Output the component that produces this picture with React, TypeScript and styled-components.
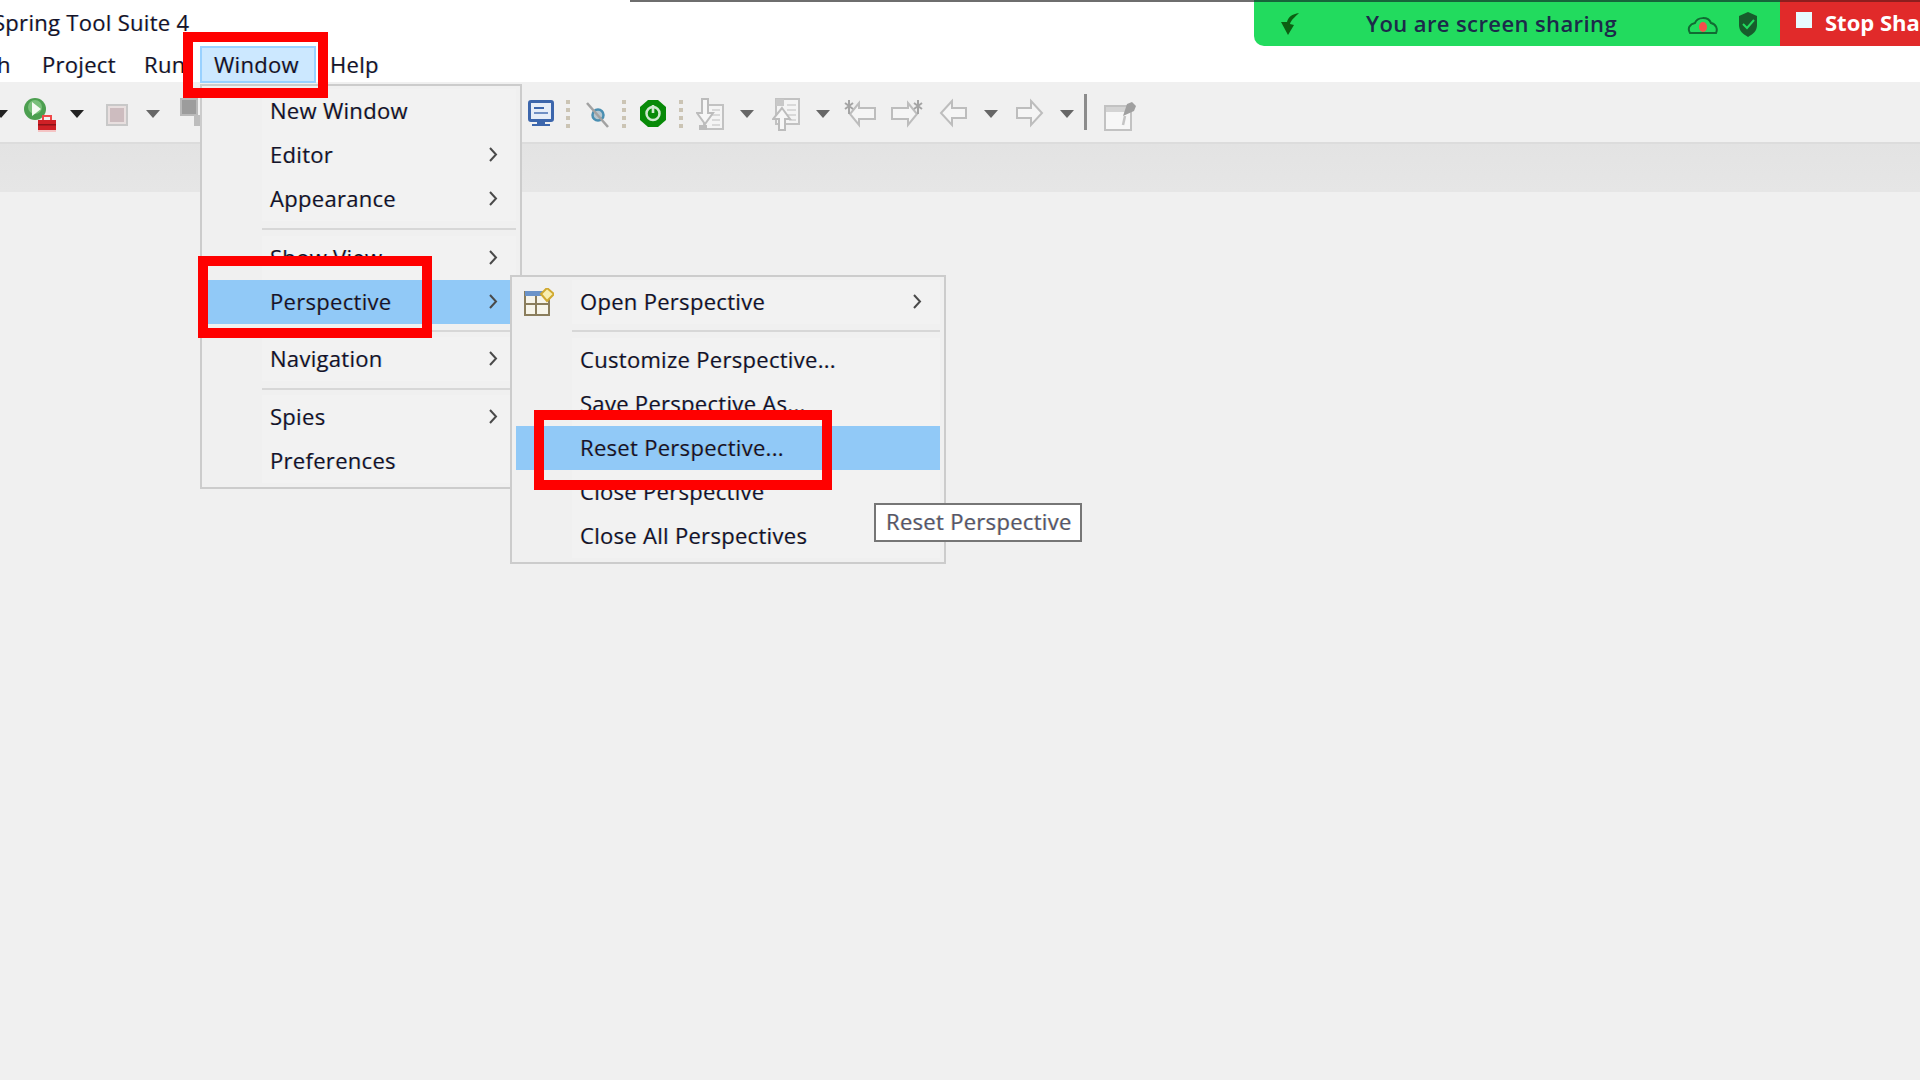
import React from 'react'
import styled, { createGlobalStyle } from 'styled-components'

const GlobalStyle = createGlobalStyle`
  html, body {
    margin: 0;
    padding: 0;
    width: 1920px;
    height: 1080px;
    overflow: hidden;
    background: #f0f0f0;
  }
  * { box-sizing: border-box; }
`

const fringe = `text-shadow: -0.6px 0 rgba(230, 150, 0, 0.35), 0.6px 0 rgba(0, 120, 255, 0.35);`

const Screen = styled.div`
  position: relative;
  width: 1920px;
  height: 1080px;
  overflow: hidden;
  background: #f0f0f0;
  font-family: "Open Sans", "Noto Sans", sans-serif;
  font-size: 22px;
  letter-spacing: 0.3px;
  color: #14142a;
`

const TitleBar = styled.div`
  height: 46px;
  background: #fff;
  display: flex;
  align-items: center;
  padding-bottom: 3px;
  ${fringe}
`

const Title = styled.span`
  margin-left: -7px;
  white-space: nowrap;
`

const MenuBar = styled.div`
  height: 36px;
  background: #fff;
  display: flex;
  align-items: center;
  ${fringe}
`

const MenuItem = styled.div<{ $w: number; $active?: boolean; $first?: boolean }>`
  flex: none;
  width: ${p => p.$w}px;
  height: 37px;
  display: flex;
  align-items: center;
  padding-left: ${p => (p.$active ? 12 : 14)}px;
  white-space: nowrap;
  margin-left: ${p => (p.$first ? -17 : 0)}px;
  background: ${p => (p.$active ? '#cce8ff' : 'transparent')};
  border: ${p => (p.$active ? '2px solid #99d1ff' : 'none')};
`

const Toolbar = styled.div`
  height: 60px;
  display: flex;
  align-items: center;
  background: #f0f0f0;
`

const Tool = styled.svg<{ $ml: number }>`
  flex: none;
  height: 40px;
  margin-left: ${p => p.$ml}px;
  filter: blur(0.45px);
`

const ToolDivider = styled.div`
  flex: none;
  width: 3px;
  height: 36px;
  margin-left: 10px;
  background: #8c8c8c;
`

const TabBand = styled.div`
  height: 50px;
  border-top: 2px solid #dcdcdc;
  background: linear-gradient(#e3e3e3, #e6e6e6);
`

const Menu = styled.div<{ $left: number; $top: number; $width: number }>`
  position: absolute;
  left: ${p => p.$left}px;
  top: ${p => p.$top}px;
  width: ${p => p.$width}px;
  padding: 3px 0 4px;
  border: 2px solid #cccccc;
  background: #f0f0f0;
`

const Row = styled.div<{ $active?: boolean; $inset: number }>`
  height: 44px;
  margin: 0 4px 0 ${p => p.$inset}px;
  display: flex;
  align-items: stretch;
  background: ${p => (p.$active ? '#91c9f7' : 'transparent')};
`

const IconCell = styled.div<{ $w: number }>`
  flex: none;
  width: ${p => p.$w}px;
  display: flex;
  align-items: center;
  padding-left: 8px;
`

const Label = styled.div<{ $active?: boolean }>`
  flex: 1;
  display: flex;
  align-items: center;
  justify-content: space-between;
  padding: 0 18px 2px 8px;
  white-space: nowrap;
  background: ${p => (p.$active ? 'transparent' : '#f2f2f2')};
  ${fringe}
`

const Divider = styled.div<{ $left: number; $above: number; $below: number }>`
  height: 2px;
  margin: ${p => p.$above}px 4px ${p => p.$below}px ${p => p.$left}px;
  background: #d7d7d7;
`

const Chevron = styled.svg`
  flex: none;
  width: 9px;
  height: 15px;
`

const TooltipBox = styled.div`
  position: absolute;
  left: 874px;
  top: 503px;
  width: 208px;
  height: 39px;
  padding: 0 0 3px 10px;
  display: flex;
  align-items: center;
  white-space: nowrap;
  background: #fff;
  border: 2px solid #767676;
  color: #575766;
  ${fringe}
`

const Callout = styled.div<{ $l: number; $t: number; $w: number; $h: number }>`
  position: absolute;
  left: ${p => p.$l}px;
  top: ${p => p.$t}px;
  width: ${p => p.$w}px;
  height: ${p => p.$h}px;
  border: 10px solid #ff0000;
`

const TopLine = styled.div`
  position: absolute;
  left: 630px;
  top: 0;
  width: 624px;
  height: 2px;
  background: #6e6e6e;
`

const ShareBar = styled.div`
  position: absolute;
  left: 1254px;
  top: 0;
  width: 680px;
  height: 46px;
  display: flex;
  border-bottom-left-radius: 10px;
  overflow: hidden;
`

const SharePanel = styled.div`
  flex: none;
  width: 526px;
  display: flex;
  align-items: center;
  padding-left: 26px;
  border-top: 2px solid #17653a;
  background: #22db5e;
`

const ShareText = styled.span`
  margin: -3px 0 0 66px;
  width: 309px;
  white-space: nowrap;
  letter-spacing: 0.4px;
  color: #1c2a4a;
  font-weight: 600;
`

const StopPanel = styled.div`
  flex: 1;
  display: flex;
  align-items: center;
  padding-left: 16px;
  border-top: 2px solid #8d1e1e;
  background: #e12a2a;
`

const StopSquare = styled.div`
  flex: none;
  width: 16px;
  height: 16px;
  margin: -8px 13px 0 0;
  background: #e6fbff;
`

const StopText = styled.span`
  margin-top: -4px;
  color: #fff;
  font-weight: 700;
  letter-spacing: 0;
  white-space: nowrap;
`

const ShareIcon = styled.svg<{ $ml: number; $w: number }>`
  flex: none;
  width: ${p => p.$w}px;
  height: 30px;
  margin-left: ${p => p.$ml}px;
`

const Drop = ({ ml, color = '#666' }: { ml: number; color?: string }) => (
  <Tool $ml={ml} width="14" viewBox="0 0 14 40">
    <polygon points="0,18 14,18 7,26" fill={color} />
  </Tool>
)

const Dots = ({ ml }: { ml: number }) => (
  <Tool $ml={ml} width="4" viewBox="0 0 4 40">
    {[10, 18, 26, 34].map(y => (
      <rect key={y} x="0" y={y - 2} width="4" height="4" fill="#cbc4b4" />
    ))}
  </Tool>
)

const RunIcon = ({ ml }: { ml: number }) => (
  <Tool $ml={ml} width="32" viewBox="0 0 32 40">
    <circle cx="11" cy="17" r="11" fill="#4c9f50" />
    <circle cx="11" cy="15" r="7" fill="#79c07a" />
    <polygon points="8,10 8,24 17,17" fill="#f4fbf2" />
    <rect x="19" y="24" width="8" height="5" fill="none" stroke="#f04848" strokeWidth="2" />
    <rect x="14" y="28" width="18" height="10" fill="#cf2026" />
    <rect x="14" y="32" width="18" height="1.5" fill="#8d1318" />
    <rect x="14" y="38" width="18" height="2" fill="#f4c4c4" />
  </Tool>
)

const StopIcon = ({ ml }: { ml: number }) => (
  <Tool $ml={ml} width="22" viewBox="0 0 22 40">
    <rect x="1" y="13" width="20" height="20" fill="#cdbcbf" stroke="#c8c8c8" strokeWidth="2" />
    <rect x="3" y="15" width="16" height="16" fill="none" stroke="#e8dfdf" strokeWidth="2" />
  </Tool>
)

const GreySquareIcon = ({ ml }: { ml: number }) => (
  <Tool $ml={ml} width="20" viewBox="0 0 20 40">
    <rect x="1" y="7" width="16" height="16" fill="#9c9c9c" stroke="#b9b9b9" strokeWidth="2" />
    <rect x="14" y="23" width="6" height="11" fill="#bdbdbd" />
  </Tool>
)

const MonitorIcon = ({ ml }: { ml: number }) => (
  <Tool $ml={ml} width="26" viewBox="0 0 26 40">
    <rect x="1.5" y="9.5" width="23" height="19" rx="1.5" fill="#e6edf8" stroke="#3c66ac" strokeWidth="3" />
    <rect x="6" y="15" width="10" height="2" fill="#3c66ac" />
    <rect x="6" y="20" width="14" height="2" fill="#6f8fc4" />
    <rect x="9" y="29" width="8" height="3" fill="#3c66ac" />
    <rect x="4" y="32" width="18" height="2" fill="#3c66ac" />
  </Tool>
)

const SpyIcon = ({ ml }: { ml: number }) => (
  <Tool $ml={ml} width="24" viewBox="0 0 24 40">
    <circle cx="13" cy="23" r="5.5" fill="#b6c6cf" stroke="#4a8fb2" strokeWidth="2.5" />
    <line x1="2" y1="11" x2="23" y2="35" stroke="#a2a2a2" strokeWidth="2.5" />
  </Tool>
)

const SpringIcon = ({ ml }: { ml: number }) => (
  <Tool $ml={ml} width="28" viewBox="0 0 28 40">
    <polygon points="9,8 19,8 27,15 27,28 19,35 9,35 1,28 1,15" fill="#088a08" />
    <circle cx="14" cy="21.5" r="6.5" fill="none" stroke="#cfe9cf" strokeWidth="2.5" />
    <rect x="12.7" y="13" width="2.6" height="8" fill="#cfe9cf" />
  </Tool>
)

const DocDownIcon = ({ ml }: { ml: number }) => (
  <Tool $ml={ml} width="28" viewBox="0 0 28 40">
    <rect x="8" y="13" width="19" height="24" fill="#f4f4f4" stroke="#c2c2c2" strokeWidth="2" />
    <path d="M16 18h8M16 23h8M16 28h8M16 33h8" stroke="#d0d0d0" strokeWidth="1.5" />
    <rect x="3" y="33" width="8" height="5" fill="#bcbcbc" />
    <path d="M5 7h6v14h5l-8 11-8-11h5z" transform="translate(1 0)" fill="#f6f6f6" stroke="#bcbcbc" strokeWidth="2" />
  </Tool>
)

const DocUpIcon = ({ ml }: { ml: number }) => (
  <Tool $ml={ml} width="28" viewBox="0 0 28 40">
    <rect x="4" y="7" width="23" height="25" fill="#f4f4f4" stroke="#c2c2c2" strokeWidth="2" />
    <rect x="4" y="7" width="8" height="7" fill="#c8c8c8" />
    <path d="M15 13h9M15 18h9M15 23h9M17 28h7" stroke="#d0d0d0" strokeWidth="1.5" />
    <path d="M10 16l8 11h-5v11h-6V27H1z" fill="#f6f6f6" stroke="#bcbcbc" strokeWidth="2" />
  </Tool>
)

const BugLeftIcon = ({ ml, flip }: { ml: number; flip?: boolean }) => (
  <Tool $ml={ml} width="32" viewBox="0 0 32 40">
    <g transform={flip ? 'translate(32 0) scale(-1 1)' : undefined}>
      <path d="M15 11l-9 11 9 11v-6h16V16H15z" fill="#f5f5f5" stroke="#bdbdbd" strokeWidth="2" />
      <path d="M5 8v14M1 11l8 6M9 11l-8 6" stroke="#a4a4a4" strokeWidth="2" />
    </g>
  </Tool>
)

const ArrowLeftIcon = ({ ml, flip }: { ml: number; flip?: boolean }) => (
  <Tool $ml={ml} width="28" viewBox="0 0 28 40">
    <g transform={flip ? 'translate(28 0) scale(-1 1)' : undefined}>
      <path d="M13 9L2 21l11 12v-7h14V16H13z" fill="#f5f5f5" stroke="#bdbdbd" strokeWidth="2" />
    </g>
  </Tool>
)

const PinWindowIcon = ({ ml }: { ml: number }) => (
  <Tool $ml={ml} width="32" viewBox="0 0 32 40">
    <rect x="1" y="14" width="26" height="24" fill="#f7f7f7" stroke="#c2c2c2" strokeWidth="2" />
    <rect x="2" y="15" width="24" height="5" fill="#d4d4d4" />
    <path d="M19 24l4-12 5-2 4 4-2 5z" fill="#a0a0a0" />
    <line x1="21" y1="24" x2="19" y2="33" stroke="#c4c4c4" strokeWidth="2.5" />
  </Tool>
)

const PerspectiveIcon = () => (
  <svg width="30" height="28" viewBox="0 0 30 28" style={{ filter: 'blur(0.3px)' }}>
    <rect x="1" y="4" width="24" height="23" fill="#f6f4ea" stroke="#8a7d5c" strokeWidth="2" />
    <rect x="1" y="3" width="24" height="5" fill="#6b93c9" />
    <path d="M12 8v18M2 16h22" stroke="#8a7d5c" strokeWidth="2" />
    <polygon points="23,0 30,6 23,13 17,6" fill="#f8eeb0" stroke="#d0a930" strokeWidth="2" />
  </svg>
)

const More = () => (
  <Chevron viewBox="0 0 9 15">
    <path d="M1 1l6 6.5L1 14" fill="none" stroke="#4a4a4a" strokeWidth="2" />
  </Chevron>
)

const App = () => {
  return (
    <Screen>
      <GlobalStyle />
      <TitleBar>
        <Title>Spring Tool Suite 4</Title>
      </TitleBar>
      <MenuBar>
        <MenuItem $w={45} $first>
          h
        </MenuItem>
        <MenuItem $w={102}>Project</MenuItem>
        <MenuItem $w={70}>Run</MenuItem>
        <MenuItem $w={116} $active>
          Window
        </MenuItem>
        <MenuItem $w={80}>Help</MenuItem>
      </MenuBar>
      <Toolbar>
        <Drop ml={-6} color="#222" />
        <RunIcon ml={16} />
        <Drop ml={14} color="#222" />
        <StopIcon ml={22} />
        <Drop ml={18} />
        <GreySquareIcon ml={20} />
        <MonitorIcon ml={328} />
        <Dots ml={12} />
        <SpyIcon ml={15} />
        <Dots ml={13} />
        <SpringIcon ml={13} />
        <Dots ml={12} />
        <DocDownIcon ml={13} />
        <Drop ml={16} />
        <DocUpIcon ml={18} />
        <Drop ml={16} />
        <BugLeftIcon ml={14} />
        <BugLeftIcon ml={15} flip />
        <ArrowLeftIcon ml={16} />
        <Drop ml={17} />
        <ArrowLeftIcon ml={18} flip />
        <Drop ml={16} />
        <ToolDivider />
        <PinWindowIcon ml={17} />
      </Toolbar>
      <TabBand />

      <TopLine />
      <ShareBar>
        <SharePanel>
          <ShareIcon $ml={0} $w={20} viewBox="0 0 20 30">
            <path d="M19 4C12 5 8 8 7 13H1l7 13 6-10-4-1c1-4 5-7 9-11z" fill="#0c5f12" />
          </ShareIcon>
          <ShareText>You are screen sharing</ShareText>
          <ShareIcon $ml={12} $w={32} viewBox="0 0 32 30">
            <path d="M3 24c-3-5 0-9 5-10 2-6 13-7 16 0 5 1 7 6 5 10z" fill="none" stroke="#116b33" strokeWidth="2" />
            <ellipse cx="16" cy="18" rx="4" ry="5" fill="#f4504c" />
          </ShareIcon>
          <ShareIcon $ml={18} $w={22} viewBox="0 0 22 30">
            <path d="M11 3l9 4v9c0 6-4 9-9 12-5-3-9-6-9-12V7z" fill="#175c2c" />
            <path d="M6 15l4 4 7-8" fill="none" stroke="#22db5e" strokeWidth="2" />
          </ShareIcon>
        </SharePanel>
        <StopPanel>
          <StopSquare />
          <StopText>Stop Share</StopText>
        </StopPanel>
      </ShareBar>

      <Menu $left={200} $top={84} $width={322}>
        <Row $inset={6}>
          <IconCell $w={54} />
          <Label>New Window</Label>
        </Row>
        <Row $inset={6}>
          <IconCell $w={54} />
          <Label>
            Editor
            <More />
          </Label>
        </Row>
        <Row $inset={6}>
          <IconCell $w={54} />
          <Label>
            Appearance
            <More />
          </Label>
        </Row>
        <Divider $left={60} $above={7} $below={6} />
        <Row $inset={6}>
          <IconCell $w={54} />
          <Label>
            Show View
            <More />
          </Label>
        </Row>
        <Row $inset={6} $active>
          <IconCell $w={54} />
          <Label $active>
            Perspective
            <More />
          </Label>
        </Row>
        <Divider $left={60} $above={6} $below={5} />
        <Row $inset={6}>
          <IconCell $w={54} />
          <Label>
            Navigation
            <More />
          </Label>
        </Row>
        <Divider $left={60} $above={7} $below={5} />
        <Row $inset={6}>
          <IconCell $w={54} />
          <Label>
            Spies
            <More />
          </Label>
        </Row>
        <Row $inset={6}>
          <IconCell $w={54} />
          <Label>Preferences</Label>
        </Row>
      </Menu>

      <Menu $left={510} $top={275} $width={436}>
        <Row $inset={4}>
          <IconCell $w={56}>
            <PerspectiveIcon />
          </IconCell>
          <Label>
            Open Perspective
            <More />
          </Label>
        </Row>
        <Divider $left={60} $above={6} $below={6} />
        <Row $inset={4}>
          <IconCell $w={56} />
          <Label>Customize Perspective...</Label>
        </Row>
        <Row $inset={4}>
          <IconCell $w={56} />
          <Label>Save Perspective As...</Label>
        </Row>
        <Row $inset={4} $active>
          <IconCell $w={56} />
          <Label $active>Reset Perspective...</Label>
        </Row>
        <Row $inset={4}>
          <IconCell $w={56} />
          <Label>Close Perspective</Label>
        </Row>
        <Row $inset={4}>
          <IconCell $w={56} />
          <Label>Close All Perspectives</Label>
        </Row>
      </Menu>

      <TooltipBox>Reset Perspective</TooltipBox>

      <Callout $l={183} $t={32} $w={145} $h={66} />
      <Callout $l={198} $t={256} $w={234} $h={82} />
      <Callout $l={534} $t={410} $w={298} $h={80} />
    </Screen>
  )
}

export default App
